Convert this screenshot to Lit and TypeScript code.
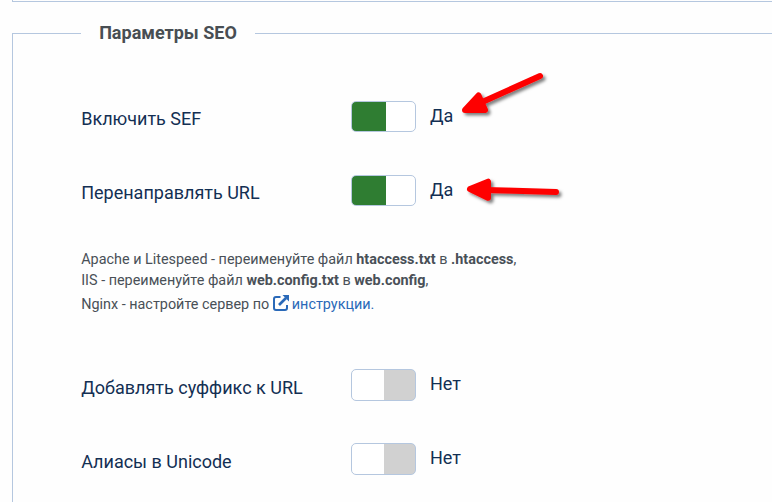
import { LitElement, html, css } from "lit";
import { customElement, property } from "lit/decorators.js";

@customElement("seo-switch")
class SeoSwitch extends LitElement {
  @property({ type: Boolean }) on = false;

  static styles = css`
    :host { display: flex; align-items: flex-start; }
    .track {
      box-sizing: border-box;
      width: 65px;
      height: 32px;
      border: 1px solid #b5c7df;
      border-radius: 5px;
      overflow: hidden;
      background: linear-gradient(to right, #fff 32px, #d1d1d1 32px);
    }
    .track.on {
      height: 31px;
      background: linear-gradient(to right, #2f7d32 34px, #fff 34px);
    }
    .value { margin-left: 14px; font-size: 18px; line-height: 29px; }
  `;

  render() {
    return html`<div class="track ${this.on ? "on" : ""}"></div>
      <span class="value">${this.on ? "Да" : "Нет"}</span>`;
  }
}

@customElement("app-root")
class AppRoot extends LitElement {
  static styles = css`
    :host {
      display: block;
      position: relative;
      box-sizing: border-box;
      width: 100%;
      height: 502px;
      overflow: hidden;
      background: #fefefe;
      color: #132f53;
      font-family: Roboto, "Noto Sans", sans-serif;
      padding-left: 12px;
    }
    .previous {
      box-sizing: border-box;
      height: 2px;
      border-left: 1px solid #b5c7df;
      border-bottom: 1px solid #b5c7df;
    }
    .group { margin-top: 31px; height: 480px; border-left: 1px solid #b5c7df; }
    .heading { display: flex; height: 1px; align-items: center; }
    .heading::before { content: ""; width: 68px; height: 1px; background: #b5c7df; }
    .heading::after { content: ""; flex: 1; height: 1px; background: #b5c7df; }
    .title {
      width: 174px;
      text-align: center;
      font-size: 18px;
      font-weight: 700;
      line-height: 22px;
      padding-bottom: 2px;
      color: #484e53;
      white-space: nowrap;
    }
    .fields { padding: 67px 0 0 68px; }
    .row { display: grid; grid-template-columns: 270px 1fr; height: 74px; font-size: 18px; }
    .label { line-height: 22px; padding: 7px 0 0 0.2px; white-space: nowrap; }
    .label.off { padding-top: 8px; }
    .help { height: 120px; padding-left: 0.2px; font-size: 14.4px; line-height: 21px; color: #495057; white-space: nowrap; }
    .help b { font-weight: 700; }
    .line { height: 21px; }
    .line.last { line-height: 28px; }
    .link { color: #2a69b8; }
    .icon { width: 16px; height: 16px; vertical-align: -2px; margin-right: -0.6px; }
    .arrows { position: absolute; left: 0; top: 0; width: 772px; height: 502px; pointer-events: none; }
  `;

  row(label: string, on: boolean) {
    return html`<div class="row">
      <div class="label ${on ? "" : "off"}">${label}</div>
      <seo-switch ?on=${on}></seo-switch>
    </div>`;
  }

  render() {
    return html`
      <div class="previous"></div>
      <section class="group">
        <div class="heading"><span class="title">Параметры SEO</span></div>
        <div class="fields">
          ${this.row("Включить SEF", true)}
          ${this.row("Перенаправлять URL", true)}
          <div class="help">
            <div class="line">Apache и Litespeed - переименуйте файл <b>htaccess.txt</b> в <b>.htaccess</b>,</div>
            <div class="line">IIS - переименуйте файл <b>web.config.txt</b> в <b>web.config</b>,</div>
            <div class="line last">Nginx - настройте сервер по <span class="link"><svg class="icon" viewBox="0 0 16 16" fill="none" stroke="currentColor" stroke-width="2"><path d="M7.500 2H3Q1 2 1 4V13Q1 15 3 15H12Q14 15 14 13V10" /><path d="M6 10L13 3" stroke-width="2.600" /><path d="M9.500 0H16V6.500Z" fill="currentColor" stroke="none" /></svg> инструкции.</span></div>
          </div>
          ${this.row("Добавлять суффикс к URL", false)}
          ${this.row("Алиасы в Unicode", false)}
        </div>
      </section>
      <svg class="arrows" viewBox="0 0 772 502">
        <defs>
          <filter id="shade" filterUnits="userSpaceOnUse" x="450" y="60" width="130" height="160">
            <feDropShadow dx="2.5" dy="2.5" stdDeviation="1.8" flood-color="#000" flood-opacity=".5" />
          </filter>
        </defs>
        <g fill="#fe0000" stroke="#fe0000" stroke-width="6" stroke-linecap="round" stroke-linejoin="round">
          <g filter="url(#shade)">
            <path d="M540 76L480 103" />
            <path d="M465 110L478.500 95.500L485 110Z" />
          </g>
          <g filter="url(#shade)">
            <path d="M556 192L485 190" />
            <path d="M470 189L488 181.700L488 197.700Z" />
          </g>
        </g>
      </svg>
    `;
  }
}
